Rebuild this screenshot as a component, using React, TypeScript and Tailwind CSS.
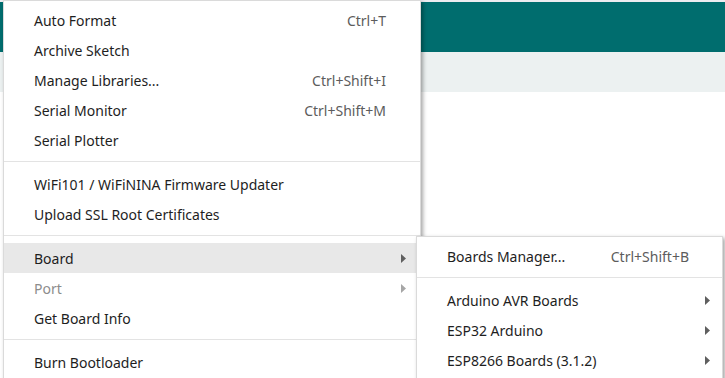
import React from "react";

const Arrow = ({ disabled }: { disabled?: boolean }) => (
  <svg width="5" height="9" viewBox="0 0 5 9" className="block">
    <path d="M0 0 L5 4.5 L0 9 Z" fill={disabled ? "#a6a6a6" : "#5f5f5f"} />
  </svg>
);

type Item =
  | { sep: true }
  | { label: string; shortcut?: string; sub?: boolean; disabled?: boolean; active?: boolean; sep?: false };

const mainItems: Item[] = [
  { label: "Auto Format", shortcut: "Ctrl+T" },
  { label: "Archive Sketch" },
  { label: "Manage Libraries...", shortcut: "Ctrl+Shift+I" },
  { label: "Serial Monitor", shortcut: "Ctrl+Shift+M" },
  { label: "Serial Plotter" },
  { sep: true },
  { label: "WiFi101 / WiFiNINA Firmware Updater" },
  { label: "Upload SSL Root Certificates" },
  { sep: true },
  { label: "Board", sub: true, active: true },
  { label: "Port", sub: true, disabled: true },
  { label: "Get Board Info" },
  { sep: true },
  { label: "Burn Bootloader" },
];

const subItems: Item[] = [
  { label: "Boards Manager...", shortcut: "Ctrl+Shift+B" },
  { sep: true },
  { label: "Arduino AVR Boards", sub: true },
  { label: "ESP32 Arduino", sub: true },
  { label: "ESP8266 Boards (3.1.2)", sub: true },
];

function Menu({ items, arrowCol }: { items: Item[]; arrowCol: string }) {
  return (
    <div className="pt-[4px]">
      {items.map((it, i) =>
        it.sep ? (
          <div key={i} className="mt-[6px] mb-[7px] h-px bg-[#e3e3e3]" />
        ) : (
          <div
            key={i}
            className={
              "flex h-[30px] items-center pl-[30px] " +
              (it.active ? "bg-[#e8e8e8] " : "") +
              (it.disabled ? "text-[#8c8c8c]" : "text-[#1e1e1e]")
            }
          >
            <span className="flex-1 whitespace-nowrap">{it.label}</span>
            {it.shortcut && <span className="whitespace-nowrap text-[#5c5c5c]">{it.shortcut}</span>}
            <span className={"flex h-full items-center " + arrowCol}>{it.sub && <Arrow disabled={it.disabled} />}</span>
          </div>
        )
      )}
    </div>
  );
}

export default function App() {
  return (
    <div
      className="relative h-[378px] w-[725px] overflow-hidden bg-white text-[14px]"
      style={{ fontFamily: "'Noto Sans', sans-serif" }}
    >
      <div className="flex h-full flex-col">
        <div className="h-[2px] bg-[#ececf0]" />
        <div className="h-[50px] bg-[#006d6e]" />
        <div className="h-[40px] bg-[#ecf1f1]" />
        <div className="flex-1 bg-white" />
      </div>

      <div className="absolute left-[3px] top-0 h-[390px] w-[418px] border border-[#dadada] bg-white shadow-[2px_2px_4px_rgba(0,0,0,0.35)]">
        <Menu items={mainItems} arrowCol="w-[34px] pl-[15px]" />
      </div>

      <div className="absolute left-[416px] top-[236px] h-[150px] w-[307px] border border-[#dadada] bg-white shadow-[2px_2px_4px_rgba(0,0,0,0.35)]">
        <Menu items={subItems} arrowCol="w-[33px] pl-[16px]" />
      </div>
    </div>
  );
}
